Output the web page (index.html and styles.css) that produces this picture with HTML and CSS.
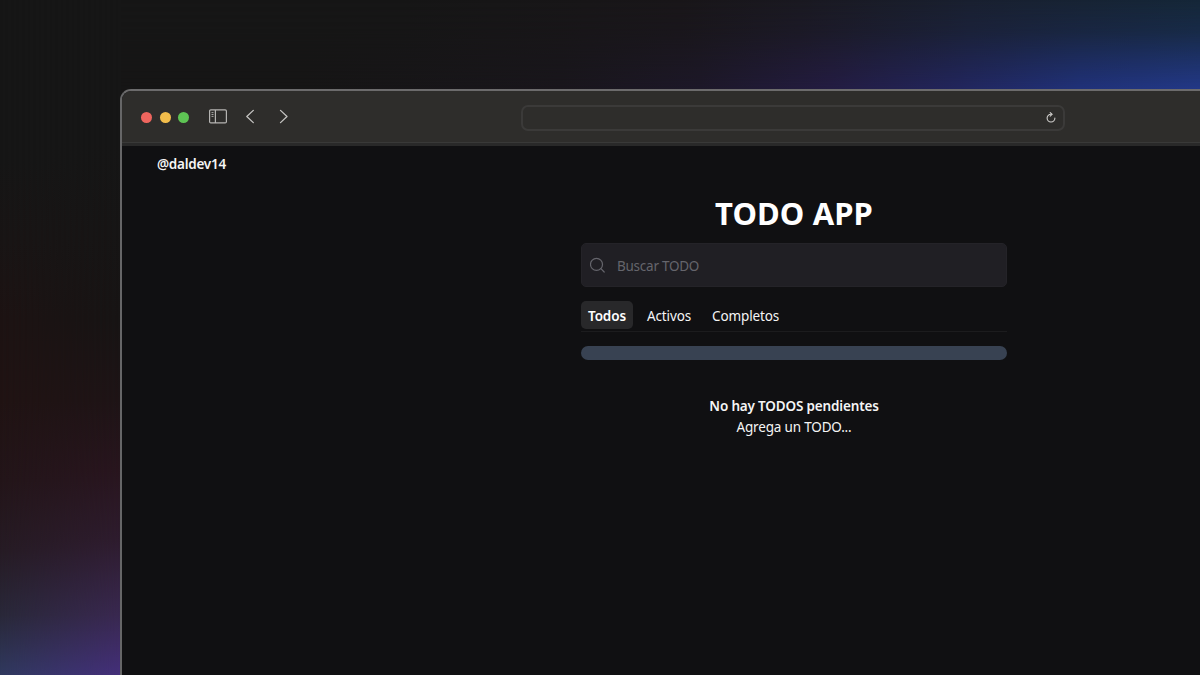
FILE: index.html
```html
<!DOCTYPE html>
<html lang="es">
<head>
<meta charset="utf-8">
<title>TODO APP</title>
<link rel="stylesheet" href="styles.css">
</head>
<body>
<div class="glow glow-top"></div>
<div class="glow glow-left"></div>
<main class="window">
  <header class="toolbar">
    <div class="lights"><span class="light red"></span><span class="light yellow"></span><span class="light green"></span></div>
    <svg class="sidebar-icon" width="18" height="15" viewBox="0 0 18 15" fill="none" stroke="#b5b4b2"><rect x=".6" y=".9" width="16.8" height="13" rx="1.2" stroke-width="1.2"/><path d="M6.4 1v13" stroke-width="1.2"/><path d="M2.5 3.6h2M2.5 5.5h2M2.5 7.4h2" stroke-width=".9"/></svg>
    <svg class="back" width="9" height="15" viewBox="0 0 9 15" fill="none" stroke="#c4c3c1" stroke-width="1.3" stroke-linecap="round" stroke-linejoin="round"><path d="M7.3 1.4.8 7.5l6.5 6.1"/></svg>
    <svg class="forward" width="9" height="15" viewBox="0 0 9 15" fill="none" stroke="#c4c3c1" stroke-width="1.3" stroke-linecap="round" stroke-linejoin="round"><path d="m1.5 1.4 6.5 6.1-6.5 6.1"/></svg>
    <div class="address"><svg width="10" height="11" viewBox="0 0 10 11" fill="none" stroke="#d0cfcd" stroke-width="1.1" stroke-linecap="round"><path d="M5.5 2.2H5a3.9 3.9 0 1 0 3.9 3.9"/><path d="m4.2.6 1.9 1.7-1.9 1.8"/></svg></div>
  </header>
  <section class="page">
    <div class="user">@daldev14</div>
    <div class="app">
      <h1>TODO APP</h1>
      <div class="search">
        <svg width="16" height="16" viewBox="0 0 16 16" fill="none" stroke="#65656c" stroke-width="1.2" stroke-linecap="round"><circle cx="6.5" cy="7.4" r="6"/><path d="m10.9 11.7 3.3 3.3"/></svg>
        <span>Buscar TODO</span>
      </div>
      <nav class="tabs">
        <span class="tab active">Todos</span><span class="tab t-activos">Activos</span><span class="tab t-completos">Completos</span>
      </nav>
      <div class="progress"></div>
      <div class="empty"><strong>No hay TODOS pendientes</strong><span>Agrega un TODO...</span></div>
    </div>
  </section>
</main>
</body>
</html>
```
FILE: styles.css
```css
* { box-sizing: border-box; }
body {
  margin: 0;
  width: 1200px;
  height: 675px;
  overflow: hidden;
  padding: 89px 0 0 120px;
  font-family: "Noto Sans", "Open Sans", sans-serif;
  color: #f5f5f5;
  background: linear-gradient(90deg, #161616 0, #161616 400px, #191619 680px, #1a1921 800px, #192030 970px, #152738 1200px);
}
/* Colour glows behind the window */
.glow { position: absolute; z-index: -1; left: 0; top: 0; }
.glow-top {
  width: 1200px;
  height: 92px;
  background: linear-gradient(90deg, #161515 300px, #19161c 560px, #1d1829 700px, #241c43 830px, #22265f 960px, #21327c 1080px, #23398a 1200px);
  mask-image: linear-gradient(180deg, transparent, rgba(0, 0, 0, .2) 35%, rgba(0, 0, 0, .62) 68%, #000);
}
.glow-left {
  width: 121px;
  height: 675px;
  background: linear-gradient(180deg, #161616 160px, #191515 240px, #1d1313 320px, #201313 400px, #231519 480px, #261b24 550px, #292839 615px, #30395f 675px);
}
.glow-left::after {
  content: "";
  display: block;
  height: 675px;
  background: linear-gradient(180deg, #161616 140px, #171414 320px, #1e1416 400px, #28151e 470px, #2e1c2e 540px, #392850 615px, #442f7a 675px);
  mask-image: linear-gradient(90deg, transparent, #000);
}
.window {
  width: 1100px;
  height: 610px;
  border: 2px solid #666667;
  border-top-color: #6c6b6c;
  border-radius: 11px;
  overflow: hidden;
  background: #101012;
}
.toolbar {
  height: 55px;
  display: flex;
  align-items: center;
  background: #2e2d2b;
  border-bottom: 3px solid #292929;
  box-shadow: inset 0 -1px #393938;
  padding: 0 0 1px 19px;
}
.lights { display: flex; gap: 7.6px; width: 68px; padding-top: 1px; }
.light { width: 11px; height: 11px; border-radius: 50%; }
.red { background: #ee655e; }
.yellow { background: #f2bd4b; }
.green { background: #5ec454; }
.back { margin: 0 0 1px 19px; }
.forward { margin: 0 0 1px 24px; }
.address {
  width: 544px;
  height: 26px;
  margin: 2px 0 0 233px;
  border: 2px solid #3b3a39;
  border-radius: 7px;
  display: flex;
  align-items: center;
  justify-content: flex-end;
  padding-right: 7px;
}
.user { padding: 9px 0 0 35px; height: 47px; font-size: 13.5px; line-height: 19px; font-weight: 600; letter-spacing: -.25px; }
.app { width: 426px; margin-left: 459px; }
h1 { margin: 0; height: 50px; line-height: 40px; font-size: 31px; font-weight: 700; text-align: center; color: #fff; letter-spacing: .12px; }
.search {
  height: 44px;
  display: flex;
  align-items: center;
  gap: 11px;
  padding-left: 8px;
  background: #201f24;
  border: 1px solid #242328;
  border-radius: 5px;
  color: #65656c;
  font-size: 13.5px;
  letter-spacing: -.25px;
}
.search span { padding-top: 1px; }
.tabs {
  display: flex;
  height: 45px;
  padding-top: 14px;
  border-bottom: 1px solid #1c1c1e;
  font-size: 13.5px;
  line-height: 30px;
  letter-spacing: -.12px;
}
.tab { height: 28px; }
.active { width: 52px; text-align: center; border-radius: 5px; background: #28282a; color: #fff; font-weight: 600; }
.t-activos { margin-left: 14px; width: 65px; }
.progress { margin-top: 14px; height: 14px; border-radius: 7px; background: #384252; }
.empty { margin-top: 36px; display: flex; flex-direction: column; align-items: center; font-size: 13.5px; line-height: 21px; letter-spacing: -.17px; }
.empty strong { font-weight: 600; }
```
